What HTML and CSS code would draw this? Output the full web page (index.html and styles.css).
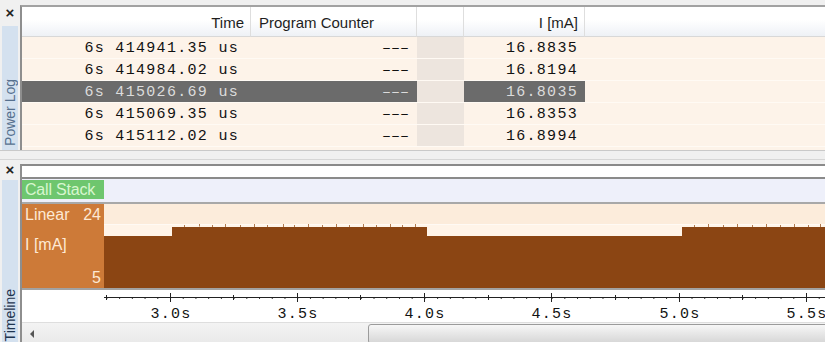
FILE: index.html
```html
<!DOCTYPE html>
<html lang="en">
<head>
    <meta charset="UTF-8">
    <title>Power Log / Timeline</title>
    <link rel="stylesheet" href="styles.css">
</head>
<body>
    <div class="dock top">
        <div class="side">
            <span class="close">×</span>
            <div class="vtab"><span>Power Log</span></div>
        </div>
        <div class="pane">
            <div class="log">
                <div class="hd right">Time</div>
                <div class="hd">Program Counter</div>
                <div class="hd"></div>
                <div class="hd right">I [mA]</div>
                <div class="hd last"></div>

                <div class="c">6s 414941.35 us</div><div class="c pc">–––</div><div class="c blank"></div><div class="c">16.8835</div><div class="c fill"></div>
                <div class="c">6s 414984.02 us</div><div class="c pc">–––</div><div class="c blank"></div><div class="c">16.8194</div><div class="c fill"></div>
                <div class="c sel">6s 415026.69 us</div><div class="c pc sel">–––</div><div class="c blank"></div><div class="c sel">16.8035</div><div class="c fill"></div>
                <div class="c">6s 415069.35 us</div><div class="c pc">–––</div><div class="c blank"></div><div class="c">16.8353</div><div class="c fill"></div>
                <div class="c">6s 415112.02 us</div><div class="c pc">–––</div><div class="c blank"></div><div class="c">16.8994</div><div class="c fill"></div>
            </div>
        </div>
    </div>

    <div class="splitter"></div>

    <div class="dock bottom">
        <div class="side">
            <span class="close">×</span>
            <div class="vtab dark"><span>Timeline</span></div>
        </div>
        <div class="pane">
            <div class="blank-row"></div>
            <div class="stack-row"><span class="stack-label">Call Stack</span></div>
            <div class="chart-row">
                <div class="chart-label">
                    <div class="lbl-line"><span>Linear</span><span>24</span></div>
                    <div class="lbl-unit">I [mA]</div>
                    <div class="lbl-min">5</div>
                </div>
                <svg class="chart" width="721" height="84" viewBox="0 0 721 84" preserveAspectRatio="none">
                    <rect x="0" y="0" width="721" height="84" fill="#fcecdb"/>
                    <rect x="0" y="20" width="721" height="12" fill="#fff4e8"/>
                    <line x1="0" y1="20.5" x2="721" y2="20.5" stroke="#fffaf4"/>
                    <path fill="#8b4513" d="M0 32 H68 V23 H323 V32 H578 V23 H721 V84 H0 Z"/>
                    <path fill="#b07a50" d="M80 23v-2h1v2z M95 23v-3h1v2z M108 23v-2h1v2z M121 23v-3h1v3z M136 23v-2h1v2z M150 23v-3h1v3z M163 23v-2h1v2z M179 23v-3h1v3z M190 23v-2h1v2z M204 23v-3h1v3z M218 23v-2h1v2z M232 23v-3h1v3z M245 23v-2h1v2z M259 23v-3h1v3z M272 23v-2h1v2z M286 23v-3h1v3z M298 23v-2h1v2z M311 23v-3h1v3z M590 23v-2h1v2z M604 23v-3h1v3z M619 23v-2h1v2z M633 23v-3h1v3z M648 23v-2h1v2z M662 23v-3h1v3z M676 23v-2h1v2z M690 23v-3h1v3z M704 23v-2h1v2z M716 23v-3h1v3z"/>
                </svg>
            </div>
            <div class="axis-row">
                <svg class="axis" width="721" height="32" viewBox="0 0 721 32">
                    <defs>
                        <pattern id="minor" x="2.4" y="0" width="12.72" height="32" patternUnits="userSpaceOnUse">
                            <rect x="0" y="7" width="1" height="2" fill="#333"/>
                        </pattern>
                    </defs>
                    <rect x="0" y="0" width="721" height="32" fill="url(#minor)"/>
                    <line x1="0" y1="7.5" x2="721" y2="7.5" stroke="#222"/>
                    <path stroke="#222" d="M66.5 3v9 M193.5 3v9 M320.5 3v9 M447.5 3v9 M575.5 3v9 M702.5 3v9 M2.5 5v5 M129.5 5v5 M256.5 5v5 M384.5 5v5 M511.5 5v5 M638.5 5v5"/>
                    <g class="tick-label">
                        <text x="67" y="28">3.0s</text>
                        <text x="194" y="28">3.5s</text>
                        <text x="321" y="28">4.0s</text>
                        <text x="448" y="28">4.5s</text>
                        <text x="576" y="28">5.0s</text>
                        <text x="703" y="28">5.5s</text>
                    </g>
                </svg>
            </div>
            <div class="scrollbar">
                <span class="arrow-left"></span>
                <span class="thumb"></span>
            </div>
        </div>
    </div>
</body>
</html>
```

FILE: styles.css
```css
body {
    margin: 0;
    width: 825px;
    height: 342px;
    overflow: hidden;
    background: #f0f0f0;
    font-family: "Liberation Sans", Arial, sans-serif;
}
.dock {
    display: flex;
}
.top {
    height: 150px;
    border-bottom: 1px solid #c9c9c9;
}
.bottom {
    height: 183px;
}
.splitter {
    height: 8px;
    border-bottom: 1px solid #d6d6d6;
}
.side {
    width: 20px;
    display: flex;
    flex-direction: column;
    align-items: center;
}
.close {
    font-size: 15px;
    font-weight: bold;
    line-height: 14px;
    height: 20px;
    padding-top: 6px;
    color: #222;
}
.bottom .close {
    padding-top: 3px;
    height: 17px;
}
.vtab {
    flex: 1;
    width: 16px;
    background: #d4e1ef;
    display: flex;
    flex-direction: column;
    justify-content: flex-end;
    align-items: center;
}
.vtab span {
    writing-mode: vertical-rl;
    transform: rotate(180deg);
    font-size: 14px;
    line-height: 16px;
    color: #56708e;
    padding-top: 4px;
}
.vtab.dark span {
    color: #1f3550;
    padding-top: 2px;
}
.pane {
    flex: 1;
    min-width: 0;
    border-left: 2px solid #8e8e8e;
    border-top: 2px solid #a2a2a2;
}
.top .pane {
    margin-top: 5px;
    background: #fdf3e9;
}
.bottom .pane {
    margin-top: 4px;
    border-top-color: #8a8a8a;
    background: #fff;
}

/* power log table */
.log {
    display: grid;
    grid-template-columns: 229px 166px 47px 121px 1fr;
}
.hd {
    height: 29px;
    line-height: 32px;
    font-size: 15px;
    color: #1e1e1e;
    background: linear-gradient(#ffffff, #ffffff 45%, #eef1f6);
    border-right: 1px solid #dedede;
    border-bottom: 1px solid #d8d8d8;
    padding-left: 8px;
    white-space: nowrap;
}
.hd.right {
    text-align: right;
    padding-left: 0;
    padding-right: 6px;
}
.hd.last {
    border-right: none;
}
.c {
    height: 21px;
    line-height: 24px;
    border-bottom: 1px solid #fffaf4;
    font-family: "Liberation Mono", "Courier New", monospace;
    font-size: 15px;
    letter-spacing: 1.3px;
    color: #111;
    text-align: right;
    padding-right: 7px;
    white-space: nowrap;
}
.c.pc {
    letter-spacing: 0;
    padding-right: 8px;
}
.c.blank {
    background: #ede5de;
    padding-right: 0;
}
.c.fill {
    padding-right: 0;
}
.c.sel {
    background: #6b6b6b;
    color: #dcdcdc;
}
.log .c:nth-child(5n+1) {
    padding-right: 12px;
}

/* timeline */
.blank-row {
    height: 11px;
    border-bottom: 2px solid #8a8a8a;
}
.stack-row {
    height: 21px;
    padding: 1px 0 1px 0;
    background: #eef0fa;
    border-bottom: 2px solid #a8a8a8;
}
.stack-label {
    display: inline-block;
    width: 79px;
    height: 19px;
    padding-left: 3px;
    background: #6ec66e;
    color: #d8f6d0;
    font-size: 16px;
    line-height: 20px;
    letter-spacing: -0.2px;
    white-space: nowrap;
}
.chart-row {
    height: 84px;
    display: flex;
    background: #fcecdb;
    border-bottom: 2px solid #a2a2a2;
}
.chart-label {
    width: 76px;
    padding: 0 3px 0 3px;
    background: #cd7a38;
    color: #fde9d4;
    font-size: 16px;
    display: flex;
    flex-direction: column;
}
.lbl-line {
    display: flex;
    justify-content: space-between;
    padding-top: 2px;
    line-height: 18px;
}
.lbl-unit {
    margin-top: 12px;
    line-height: 18px;
}
.lbl-min {
    margin-top: auto;
    text-align: right;
    line-height: 18px;
    padding-bottom: 1px;
}
.chart {
    display: block;
}
.axis-row {
    height: 32px;
    padding-left: 82px;
    background: #fff;
}
.axis {
    display: block;
}
.tick-label {
    font-family: "Liberation Mono", "Courier New", monospace;
    font-size: 15px;
    letter-spacing: 1.3px;
    fill: #111;
    text-anchor: middle;
}
.scrollbar {
    height: 21px;
    border-top: 1px solid #dedede;
    background: linear-gradient(#f3f3f3, #e9e9e9);
    display: flex;
    align-items: center;
    overflow: hidden;
}
.arrow-left {
    width: 0;
    height: 0;
    margin-left: 8px;
    border-top: 4px solid transparent;
    border-bottom: 4px solid transparent;
    border-right: 4px solid #555;
}
.thumb {
    margin-left: 334px;
    width: 470px;
    height: 18px;
    flex-shrink: 0;
    border: 1px solid #9b9b9b;
    border-radius: 3px;
    background: linear-gradient(#f7f7f7, #e6e6e6 50%, #d6d6d6);
}
```
